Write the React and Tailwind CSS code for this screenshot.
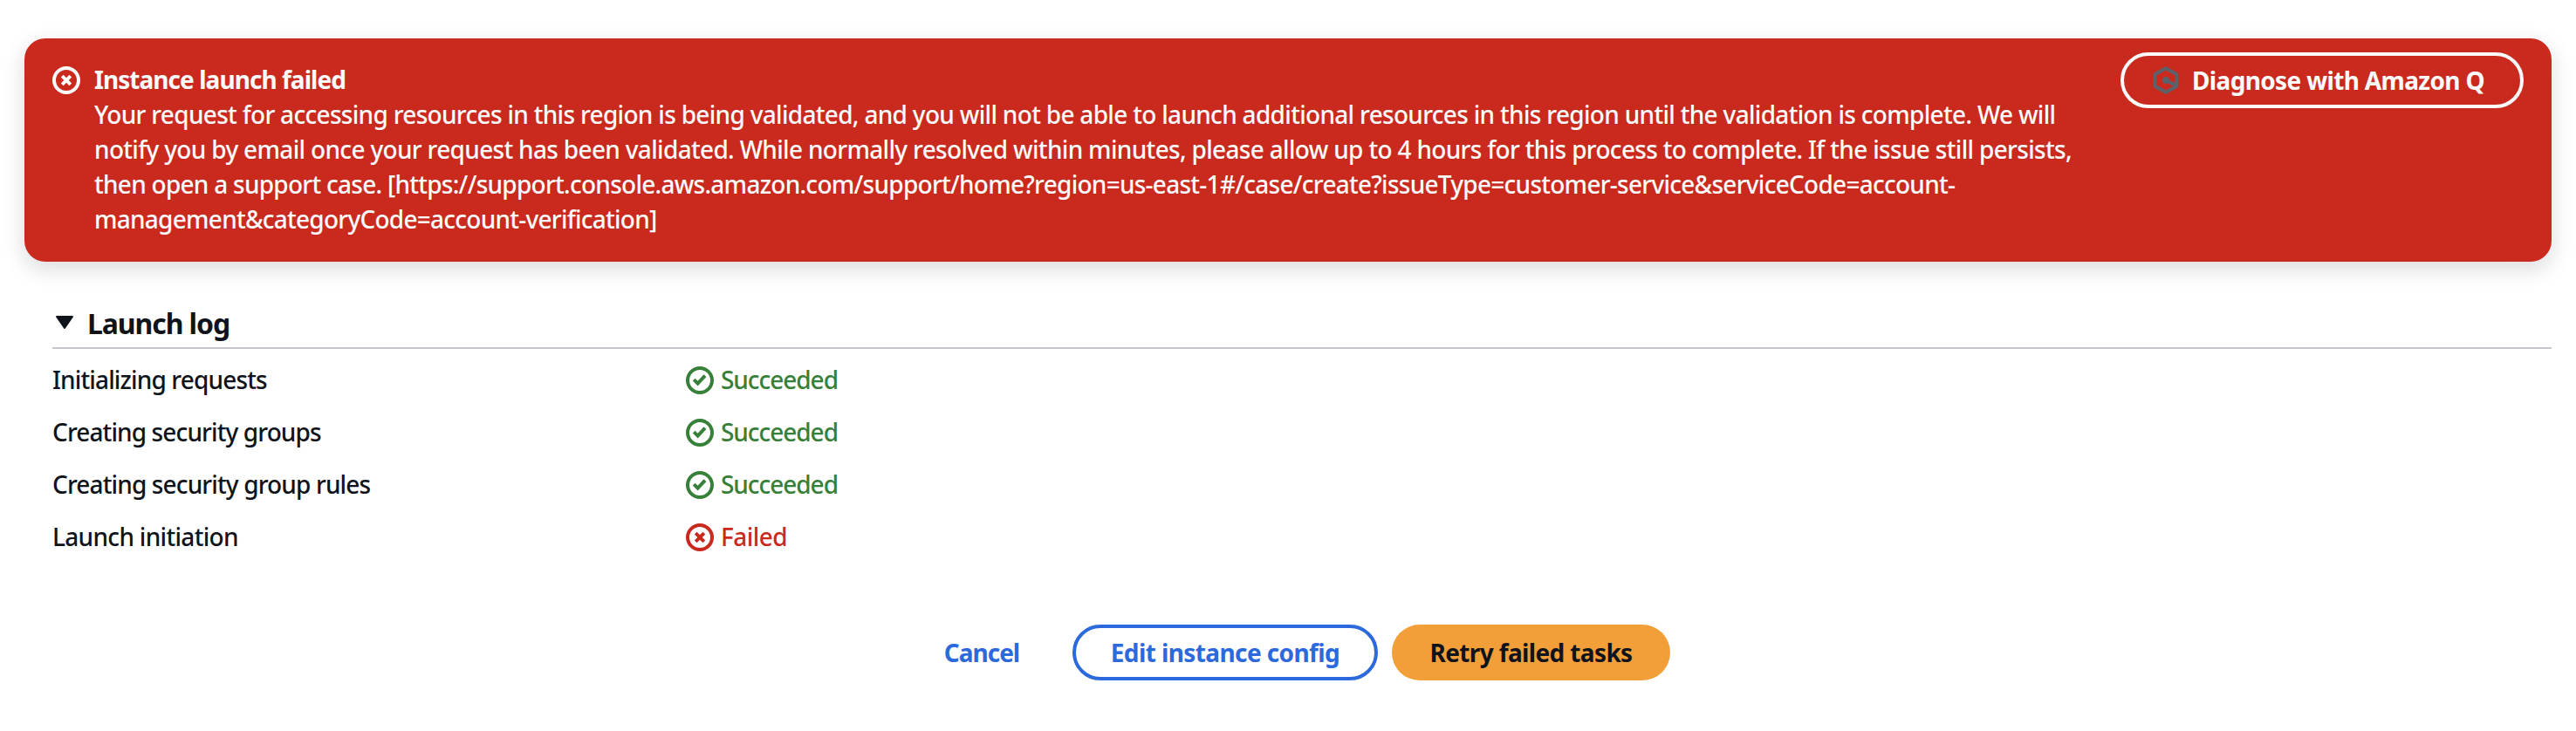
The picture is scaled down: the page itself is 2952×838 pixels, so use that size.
const stroke = { fill: 'none', stroke: 'currentColor', strokeWidth: 2 };

function FailIcon() {
  return (
    <svg viewBox="0 0 16 16" className="size-8 shrink-0" {...stroke}>
      <circle cx="8" cy="8" r="7" />
      <path d="m10.4 5.6-4.800 4.800M10.400 10.400 5.600 5.600" />
    </svg>
  );
}

function SuccessIcon() {
  return (
    <svg viewBox="0 0 16 16" className="size-8 shrink-0" {...stroke}>
      <circle cx="8" cy="8" r="7" />
      <path d="m4.6 7.600 2.200 2.200 4.200-4.500" />
    </svg>
  );
}

function AmazonQIcon() {
  return (
    <svg viewBox="0 0 32 32" className="size-8 shrink-0 text-[#5b626b]" {...stroke} strokeWidth="4" strokeLinejoin="round">
      <path d="M16 2.300 28.500 9.200V22.800L16 29.700 3.500 22.800V9.200Z" />
      <circle cx="16" cy="16" r="4" fill="currentColor" stroke="none" />
      <path d="m16 16 11 5.600" />
    </svg>
  );
}

const message = [
  {
    text: 'Your request for accessing resources in this region is being validated, and you will not be able to launch additional resources in this region until the validation is complete. We will',
    tracking: 'tracking-[-0.695px]',
  },
  {
    text: 'notify you by email once your request has been validated. While normally resolved within minutes, please allow up to 4 hours for this process to complete. If the issue still persists,',
    tracking: 'tracking-[-0.679px]',
  },
  {
    text: 'then open a support case. [https://support.console.aws.amazon.com/support/home?region=us-east-1#/case/create?issueType=customer-service&serviceCode=account-',
    tracking: 'tracking-[-0.736px]',
  },
  { text: 'management&categoryCode=account-verification]', tracking: 'tracking-[-0.749px]' },
];

const steps = [
  { name: 'Initializing requests', tracking: 'tracking-[-0.862px]', ok: true },
  { name: 'Creating security groups', tracking: 'tracking-[-0.890px]', ok: true },
  { name: 'Creating security group rules', tracking: 'tracking-[-0.867px]', ok: true },
  { name: 'Launch initiation', tracking: 'tracking-[-0.690px]', ok: false },
];

export default function App() {
  return (
    <div className="flex h-[838px] w-[2952px] flex-col overflow-hidden bg-white pt-11 font-['Noto_Sans',sans-serif] text-[28px] leading-10 font-medium whitespace-nowrap text-[#0f141a]">
      <section className="mx-7 flex h-64 shrink-0 items-start justify-between rounded-3xl bg-[#ca2a1e] pt-4 pr-8 pl-8 text-[#fbfbfb] shadow-[0_8px_24px_2px_rgba(0,7,22,0.13)]">
        <div className="flex items-start gap-4 pt-4">
          <FailIcon />
          <div className="-mt-[5px]">
            <h2 className="font-bold tracking-[-0.95px]">Instance launch failed</h2>
            {message.map((line) => (
              <p key={line.text} className={line.tracking}>{line.text}</p>
            ))}
          </div>
        </div>
        <button className="flex h-16 w-[462px] items-center rounded-full border-4 border-[#fbfbfb] pl-8 font-bold">
          <AmazonQIcon />
          <span className="-mt-px pl-[14px] tracking-[-0.66px]">Diagnose with Amazon Q</span>
        </button>
      </section>

      <section className="mt-[46px] mr-7 ml-[60px]">
        <header className="flex h-[54px] items-start border-b-2 border-[#c6c6cd] pt-[5px]">
          <svg viewBox="0 0 24 20" className="mt-[9px] ml-0.5 h-5 w-6 fill-current stroke-current" strokeWidth="2" strokeLinejoin="round">
            <path d="M3 3h18L12 16Z" />
          </svg>
          <h3 className="pl-[14px] text-[32px] font-bold tracking-[-1.1px]">Launch log</h3>
        </header>
        <ul className="flex flex-col gap-5 pt-[15px]">
          {steps.map((step) => (
            <li key={step.name} className="flex h-10 items-start">
              <span className={'w-[726px] ' + step.tracking}>{step.name}</span>
              {step.ok ? (
                <span className="flex items-start gap-2 text-[#37803a]">
                  <span className="pt-[5px]"><SuccessIcon /></span>
                  <span className="tracking-[-1.05px]">Succeeded</span>
                </span>
              ) : (
                <span className="flex items-start gap-2 text-[#ca2a1e]">
                  <span className="pt-[5px]"><FailIcon /></span>
                  <span className="tracking-[-0.550px]">Failed</span>
                </span>
              )}
            </li>
          ))}
        </ul>
      </section>

      <footer className="mt-[81px] ml-[1038px] flex h-16 items-stretch gap-4 font-bold">
        <button className="w-[175px] pr-px pb-px text-[#2b69dc]">
          <span className="tracking-[-1.02px]">Cancel</span>
        </button>
        <button className="w-[350px] rounded-full border-4 border-[#2b69dc] pb-px text-[#2b69dc]">
          <span className="tracking-[-0.600px]">Edit instance config</span>
        </button>
        <button className="w-[319px] rounded-full bg-[#f29f39] pb-px">
          <span className="tracking-[-0.63px]">Retry failed tasks</span>
        </button>
      </footer>
    </div>
  );
}
